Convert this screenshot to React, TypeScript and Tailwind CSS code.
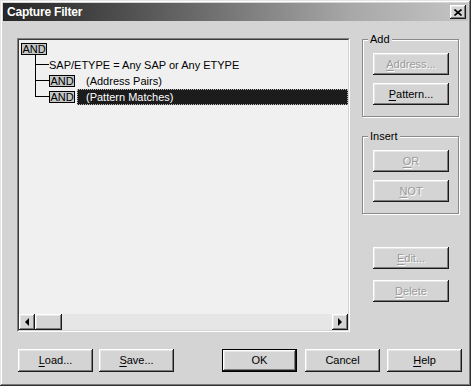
import React from "react";

const bevel =
  "shadow-[inset_-1px_-1px_#1a1a1a,inset_1px_1px_#ffffff,inset_-2px_-2px_#7c7c7c,inset_2px_2px_#e6e6e6]";

function Btn({
  label,
  u,
  disabled,
  def,
  w = "w-[76px]",
  h = "h-[22px]",
}: {
  label: string;
  u?: number;
  disabled?: boolean;
  def?: boolean;
  w?: string;
  h?: string;
}) {
  const chars =
    u === undefined ? (
      label
    ) : (
      <>
        {label.slice(0, u)}
        <span className="underline underline-offset-[2px]">{label[u]}</span>
        {label.slice(u + 1)}
      </>
    );
  const inner = (
    <div
      className={`flex items-center justify-center w-full h-full bg-[#d4d4d4] ${bevel} ${
        disabled
          ? "text-[#9a9a9a] [text-shadow:1px_1px_0_#ffffff]"
          : "text-black"
      }`}
    >
      {chars}
    </div>
  );
  if (def) {
    return <div className={`${w} ${h} border border-black`}>{inner}</div>;
  }
  return <div className={`${w} ${h}`}>{inner}</div>;
}

function AndBox() {
  return (
    <div className="h-[12px] w-[26px] border border-black bg-[#c6c6c6] flex items-center justify-center leading-[10px] text-[11px]">
      AND
    </div>
  );
}

function Connector({ last }: { last?: boolean }) {
  return (
    <div className="ml-[14px] w-[14px] h-[16px] flex flex-col shrink-0">
      <div className="h-[8px] border-l border-b border-black" />
      <div className={`h-[8px] ${last ? "" : "border-l border-black"}`} />
    </div>
  );
}

function Group({
  title,
  children,
}: {
  title: string;
  children: React.ReactNode;
}) {
  return (
    <div className="relative h-[78px] w-[97px] border border-[#8a8a8a] shadow-[1px_1px_0_#ffffff,inset_1px_1px_0_#ffffff] pl-[10px] pt-[13px] flex flex-col gap-[8px]">
      <span className="absolute -top-[8px] left-[5px] bg-[#d4d4d4] px-[2px] leading-[14px]">
        {title}
      </span>
      {children}
    </div>
  );
}

function Arrow({ dir }: { dir: "l" | "r" }) {
  return (
    <div className={`w-[16px] h-[16px] bg-[#d4d4d4] ${bevel} flex items-center justify-center`}>
      <svg width="6" height="8" viewBox="0 0 6 8">
        {dir === "l" ? (
          <polygon points="5,0 5,8 1,4" fill="#000" />
        ) : (
          <polygon points="1,0 1,8 5,4" fill="#000" />
        )}
      </svg>
    </div>
  );
}

export default function App() {
  return (
    <div
      className="w-[471px] h-[386px] bg-[#d4d4d4] p-[3px] shadow-[inset_-1px_-1px_#303030,inset_1px_1px_#e4e4e4,inset_-2px_-2px_#7a7a7a,inset_2px_2px_#ffffff] text-[11px] text-black"
      style={{ fontFamily: '"Liberation Sans", Arial, sans-serif' }}
    >
      {/* title bar */}
      <div className="h-[18px] flex items-center justify-between pl-[4px] pr-[2px] bg-[linear-gradient(to_right,#262626,#3c3c3c_15%,#707070_45%,#a8a8a8_75%,#c4c4c4)]">
        <span className="text-white font-bold text-[12px] leading-[14px] tracking-[-0.2px]">
          Capture Filter
        </span>
        <div className={`w-[16px] h-[14px] bg-[#d4d4d4] ${bevel} flex items-center justify-center`}>
          <svg width="8" height="7" viewBox="0 0 8 7">
            <path d="M0.5 0.5 L7.5 6.5 M7.5 0.5 L0.5 6.5" stroke="#000" strokeWidth="1.6" />
          </svg>
        </div>
      </div>

      {/* main row */}
      <div className="flex pl-[14px] pt-[17px]">
        {/* tree */}
        <div className="w-[333px] h-[294px] border border-t-[#808080] border-l-[#808080] border-r-white border-b-white">
          <div className="w-full h-full border border-t-[#3a3a3a] border-l-[#3a3a3a] border-r-[#d4d4d4] border-b-[#d4d4d4] bg-[#f0f0f0] flex flex-col">
            <div className="flex-1 pt-[1px] pl-[2px] leading-[16px]">
              <div className="h-[16px] flex flex-col">
                <div className="mt-[2px]">
                  <AndBox />
                </div>
                <div className="flex-1 ml-[14px] border-l border-black" />
              </div>
              <div className="h-[16px] flex">
                <Connector />
                <span className="whitespace-nowrap">SAP/ETYPE = Any SAP or Any ETYPE</span>
              </div>
              <div className="h-[16px] flex">
                <Connector />
                <div className="pt-[2px]">
                  <AndBox />
                </div>
                <span className="pl-[11px] whitespace-nowrap">(Address Pairs)</span>
              </div>
              <div className="h-[16px] flex">
                <Connector last />
                <div className="pt-[2px]">
                  <AndBox />
                </div>
                <div className="flex-1 ml-[2px] bg-[#1c1c1c] text-white pl-[9px] outline outline-1 outline-dotted outline-[#bbbbbb] -outline-offset-1 whitespace-nowrap">
                  (Pattern Matches)
                </div>
              </div>
            </div>
            {/* scrollbar */}
            <div className="h-[16px] flex bg-[#e6e6e6]">
              <Arrow dir="l" />
              <div className={`w-[27px] h-[16px] bg-[#d4d4d4] ${bevel}`} />
              <div className="flex-1" />
              <Arrow dir="r" />
            </div>
          </div>
        </div>

        {/* right column */}
        <div className="ml-[12px] pt-[1px] flex flex-col">
          <Group title="Add">
            <Btn label="Address..." u={0} disabled />
            <Btn label="Pattern..." u={0} />
          </Group>
          <div className="mt-[19px]">
            <Group title="Insert">
              <Btn label="OR" u={0} disabled />
              <Btn label="NOT" u={0} disabled />
            </Group>
          </div>
          <div className="mt-[33px] pl-[11px] flex flex-col gap-[11px]">
            <Btn label="Edit..." u={0} disabled />
            <Btn label="Delete" u={0} disabled />
          </div>
        </div>
      </div>

      {/* bottom buttons */}
      <div className="flex pl-[15px] mt-[17px]">
        <Btn label="Load..." u={0} w="w-[75px]" h="h-[23px]" />
        <div className="ml-[6px]">
          <Btn label="Save..." u={0} w="w-[75px]" h="h-[23px]" />
        </div>
        <div className="ml-[48px]">
          <Btn label="OK" def w="w-[75px]" h="h-[23px]" />
        </div>
        <div className="ml-[8px]">
          <Btn label="Cancel" w="w-[75px]" h="h-[23px]" />
        </div>
        <div className="ml-[7px]">
          <Btn label="Help" u={0} w="w-[75px]" h="h-[23px]" />
        </div>
      </div>
    </div>
  );
}
